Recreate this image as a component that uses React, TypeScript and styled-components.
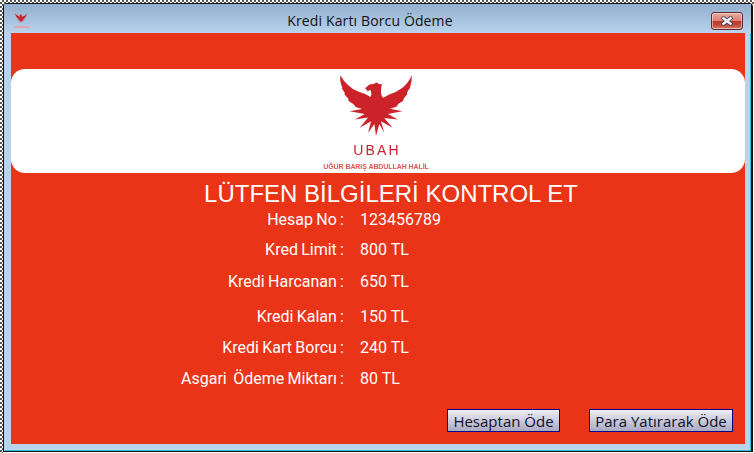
import React from 'react';
import styled, { createGlobalStyle } from 'styled-components';

/* --------------------------------- styles --------------------------------- */

const GlobalStyle = createGlobalStyle`
  html, body {
    margin: 0;
    padding: 0;
    background: #fff;
  }
`;

const Screen = styled.div`
  width: 754px;
  height: 453px;
  box-sizing: border-box;
  padding: 3px 1px 1px 3px;
  display: flex;
  overflow: hidden;
  background: repeating-conic-gradient(#555 0 25%, #fff 0 50%) 0 0 / 4px 4px;
`;

const Frame = styled.div`
  flex: 1;
  display: flex;
  flex-direction: column;
  box-sizing: border-box;
  border: 1px solid #111;
  border-right-width: 2px;
  border-top-left-radius: 4px;
  border-top-right-radius: 4px;
  background: #b9d3ec;
  box-shadow: inset -1px -1px 0 #2fc3e0, 1px 1px 0 1px #fff;
`;

const TitleBar = styled.div`
  height: 29px;
  display: flex;
  align-items: center;
  box-sizing: border-box;
  padding: 4px 8px 0 9px;
  background: linear-gradient(#92afce, #b9d3ec);
`;

const TitleIcon = styled.div`
  width: 16px;
  display: flex;
  flex-direction: column;
  align-items: center;
  filter: blur(0.3px);
`;

const TinyCaption = styled.div`
  width: 15px;
  height: 2px;
  margin-top: 2px;
  background: #e6a3b0;
`;

const TitleText = styled.div`
  flex: 1;
  text-align: center;
  font: 14px 'Open Sans', 'Noto Sans', sans-serif;
  letter-spacing: 0.13px;
  color: #111;
`;

const CloseButton = styled.button`
  width: 32px;
  height: 18px;
  padding: 0;
  display: flex;
  align-items: center;
  justify-content: center;
  box-sizing: border-box;
  border: 1px solid #5c2a38;
  border-radius: 3px;
  background: linear-gradient(#e9a99e 0%, #dd8476 47%, #b5382a 50%, #c4503f 80%, #d98373 100%);
  box-shadow: inset 0 0 0 1px rgba(255, 255, 255, 0.45);
`;

const Body = styled.div`
  flex: 1;
  margin: 0 6px 7px 7px;
  display: flex;
  flex-direction: column;
  background: #e93418;
  font-family: Roboto, 'Liberation Sans', sans-serif;
  color: #fff;
`;

const Banner = styled.div`
  height: 104px;
  margin-top: 36px;
  box-sizing: border-box;
  padding: 5px 4px 0 0;
  display: flex;
  flex-direction: column;
  align-items: center;
  background: #fff;
  border-radius: 14px;
  filter: blur(0.25px);
`;

const BrandName = styled.div`
  margin-top: 6px;
  padding-left: 2px;
  font: 14px/15px 'Liberation Sans', sans-serif;
  letter-spacing: 2.2px;
  color: #c9252c;
`;

const BrandOwners = styled.div`
  margin-top: 4px;
  font: bold 7px/9px 'Liberation Sans', sans-serif;
  letter-spacing: -0.08px;
  white-space: nowrap;
  color: #dd5550;
`;

const Heading = styled.h1`
  height: 36px;
  margin: 0;
  padding-left: 26px;
  text-align: center;
  font: 24px/41px 'Liberation Sans', sans-serif;
`;

const Rows = styled.div`
  display: flex;
  flex-direction: column;
`;

const Row = styled.div<{ $gap: number }>`
  height: 22px;
  margin-top: ${(p) => p.$gap}px;
  display: flex;
  align-items: center;
  gap: 16px;
  font-size: 16px;
  line-height: 22px;
`;

const Label = styled.span`
  width: 333px;
  text-align: right;
  white-space: pre;
  word-spacing: -0.7px;
`;

const Value = styled.span`
  white-space: nowrap;
`;

const Actions = styled.div`
  margin-top: auto;
  padding: 0 12px 12px 0;
  display: flex;
  justify-content: flex-end;
  gap: 29px;
`;

const ActionButton = styled.button<{ $width: number }>`
  width: ${(p) => p.$width}px;
  height: 23px;
  padding: 0;
  box-sizing: border-box;
  border: 1px solid #00008b;
  background: linear-gradient(#eeeef4, #a9a9c2);
  font: 15px/20px 'Open Sans', 'Noto Sans', sans-serif;
  color: #10102a;
  white-space: nowrap;
`;

/* ---------------------------------- data ---------------------------------- */

const rows = [
  { label: 'Hesap No :', value: '123456789', gap: 0 },
  { label: 'Kred Limit :', value: '800 TL', gap: 8 },
  { label: 'Kredi Harcanan :', value: '650 TL', gap: 10 },
  { label: 'Kredi Kalan :', value: '150 TL', gap: 13 },
  { label: 'Kredi Kart Borcu :', value: '240 TL', gap: 9 },
  { label: 'Asgari  Ödeme Miktarı :', value: '80 TL', gap: 9 },
];

/* ------------------------------- components ------------------------------- */

const Eagle = ({ width }: { width: number }) => (
  <svg width={width} viewBox="118 28 224 190" style={{ display: 'block' }}>
    <path
      fill="#cc2229"
      d="M122 32 Q120 55 128 68 L127 72 L135 84 L135 90 L146 103 L147 110 L163 120 L168 128 L188 134 L150 141 L196 149 L166 166 L206 160 L181 191 L215 171 L206 206 L225 179 L230 216 L240 179 L255 206 L245 171 L280 191 L255 161 L296 166 L266 149 L310 141 L272 133 L292 127 L298 118 L312 110 L314 102 L324 90 L324 84 L333 70 Q340 50 338 32 Q328 56 310 70 Q292 84 270 90 L252 100 Q246 96 245 84 Q245 70 248 58 L240 59 L232 54 L222 58 L210 60 L197 71 L205 80 L213 76 Q216 84 216 90 L213 98 Q200 88 178 82 Q160 76 146 62 Q132 50 122 32 Z"
    />
  </svg>
);

const App = () => {
  return (
    <>
      <GlobalStyle />
      <Screen>
        <Frame>
          <TitleBar>
            <TitleIcon>
              <Eagle width={12} />
              <TinyCaption />
            </TitleIcon>
            <TitleText>Kredi Kartı Borcu Ödeme</TitleText>
            <CloseButton aria-label="Kapat">
              <svg width="14" height="10" viewBox="0 0 14 10">
                <path d="M2 1 L12 9 M12 1 L2 9" stroke="#3d3d55" strokeWidth="4" />
                <path d="M2.5 1.5 L11.5 8.5 M11.5 1.5 L2.5 8.5" stroke="#f4f4f8" strokeWidth="2.4" />
              </svg>
            </CloseButton>
          </TitleBar>
          <Body>
            <Banner>
              <Eagle width={74} />
              <BrandName>UBAH</BrandName>
              <BrandOwners>UĞUR BARIŞ ABDULLAH HALİL</BrandOwners>
            </Banner>
            <Heading>LÜTFEN BİLGİLERİ KONTROL ET</Heading>
            <Rows>
              {rows.map((row) => (
                <Row key={row.label} $gap={row.gap}>
                  <Label>{row.label}</Label>
                  <Value>{row.value}</Value>
                </Row>
              ))}
            </Rows>
            <Actions>
              <ActionButton $width={113}>Hesaptan Öde</ActionButton>
              <ActionButton $width={144}>Para Yatırarak Öde</ActionButton>
            </Actions>
          </Body>
        </Frame>
      </Screen>
    </>
  );
};

export default App;
